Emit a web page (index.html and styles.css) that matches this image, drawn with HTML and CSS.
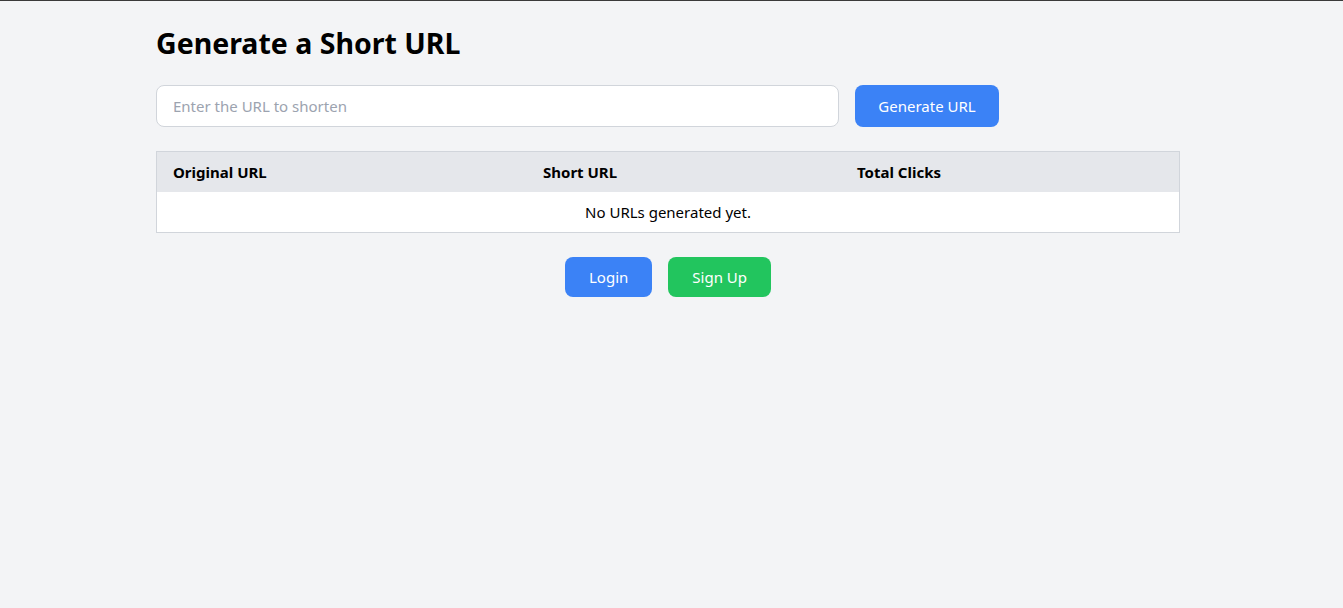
FILE: index.html
```html
<!DOCTYPE html>
<html>
<head>
<meta charset="utf-8">
<link rel="stylesheet" href="styles.css">
</head>
<body>
<div class="topline"></div>
<main class="container">
  <h1 class="title">Generate a Short URL</h1>
  <form class="url-form">
    <input class="url-input" type="text" placeholder="Enter the URL to shorten">
    <button class="btn btn-blue btn-generate" type="button">Generate URL</button>
  </form>
  <table class="url-table">
    <thead>
      <tr>
        <th class="col-orig">Original URL</th>
        <th class="col-short">Short URL</th>
        <th class="col-clicks">Total Clicks</th>
      </tr>
    </thead>
    <tbody>
      <tr><td class="empty" colspan="3">No URLs generated yet.</td></tr>
    </tbody>
  </table>
  <div class="auth">
    <button class="btn btn-blue btn-auth" type="button">Login</button>
    <button class="btn btn-green btn-auth" type="button">Sign Up</button>
  </div>
</main>
</body>
</html>
```

FILE: styles.css
```css
* { box-sizing: border-box; }
html, body { margin: 0; padding: 0; }
body {
  background: #f3f4f6;
  font-family: "Noto Sans", "Open Sans", sans-serif;
  font-size: 15px;
  color: #000;
  height: 608px;
}
.topline { height: 1px; background: #3a3a3a; }
.container {
  width: 1024px;
  margin-left: 156px;
  padding-top: 24px;
}
.title {
  margin: 0 0 24px 0;
  font-size: 28.5px;
  line-height: 36px;
  font-weight: 700;
}
.url-form {
  display: flex;
  gap: 16px;
  margin: 0 0 24px 0;
}
.url-input {
  width: 683px;
  height: 42px;
  border: 1px solid #d1d5db;
  border-radius: 8px;
  background: #fff;
  padding: 0 16px;
  font-family: inherit;
  font-size: 15px;
  outline: none;
}
.url-input::placeholder { color: #9ca3af; }
.btn {
  border: none;
  border-radius: 8px;
  color: #fff;
  font-family: inherit;
  font-size: 15px;
  cursor: pointer;
  padding: 0;
}
.btn-blue { background: #3b82f6; }
.btn-green { background: #22c55e; }
.btn-generate { width: 144px; height: 42px; }
.url-table {
  width: 1024px;
  border-collapse: separate;
  border-spacing: 0;
  border: 1px solid #d1d5db;
  background: #fff;
  table-layout: fixed;
}
.url-table th {
  background: #e5e7eb;
  text-align: left;
  font-weight: 700;
  height: 40px;
  padding: 0 16px;
}
.col-orig { width: 370px; }
.col-short { width: 314px; }
.url-table td {
  height: 40px;
  padding: 0 16px;
  text-align: center;
}
.auth {
  display: flex;
  justify-content: center;
  gap: 16px;
  margin-top: 24px;
}
.btn-auth { height: 40px; padding: 0 24px; }
```
